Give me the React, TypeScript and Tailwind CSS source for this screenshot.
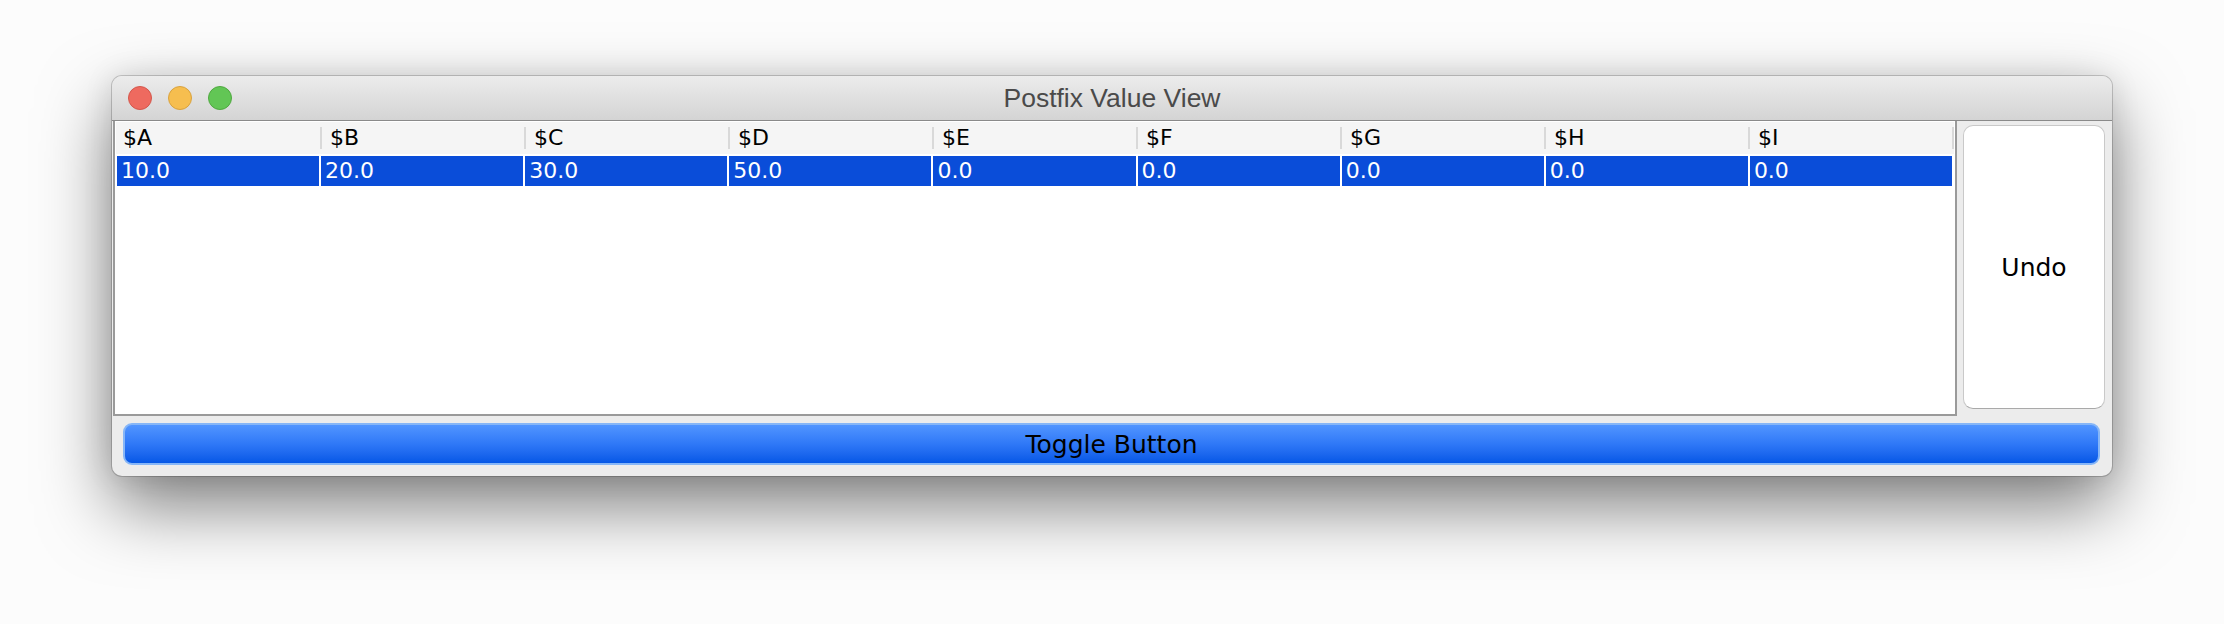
import React from "react";

const cols = ["$A", "$B", "$C", "$D", "$E", "$F", "$G", "$H", "$I"];
const vals = ["10.0", "20.0", "30.0", "50.0", "0.0", "0.0", "0.0", "0.0", "0.0"];

export default function App() {
  return (
    <div className="w-[2224px] h-[624px] bg-[#fcfcfc] pt-[76px] pl-[112px] overflow-hidden">
      <div
        className="w-[2000px] h-[400px] rounded-[10px] bg-[#ececec] flex flex-col overflow-hidden shadow-[0_0_0_1px_rgba(0,0,0,0.18),0_30px_70px_rgba(0,0,0,0.5),0_0_30px_rgba(0,0,0,0.1)]"
        style={{ fontFamily: '"DejaVu Sans", "Noto Sans", sans-serif' }}
      >
        {/* Title bar */}
        <div className="h-[45px] shrink-0 flex items-center bg-gradient-to-b from-[#ececec] to-[#d4d4d4] border-b border-[#8a8a8a]">
          <div className="w-[136px] flex items-center gap-[16px] pl-[16px]">
            <div className="w-[24px] h-[24px] rounded-full bg-[#ee6a5f] border border-[#d3574c]" />
            <div className="w-[24px] h-[24px] rounded-full bg-[#f6be4f] border border-[#d8a23f]" />
            <div className="w-[24px] h-[24px] rounded-full bg-[#62c655] border border-[#50a840]" />
          </div>
          <div
            className="flex-1 text-center text-[26.5px] text-[#4a4a4a] pr-[136px] leading-none"
            style={{ fontFamily: '"Liberation Sans", Arial, sans-serif' }}
          >
            Postfix Value View
          </div>
        </div>

        {/* Body */}
        <div className="flex h-[295px] shrink-0 items-start">
          <div className="ml-[1px] w-[1844px] h-[295px] bg-white border-l-2 border-r-2 border-b-2 border-[#9a9a9a] pt-[1px] px-[1px]">
            <div className="flex h-[32px] bg-[#f5f5f5]">
              {cols.map((c, i) => (
                <div key={c} className="flex-1 flex items-center">
                  {i > 0 && <div className="w-[2px] h-[22px] bg-[#d9d9d9]" />}
                  <span className={`text-[22px] text-black leading-none ${i === 0 ? "ml-[7px]" : "ml-[8px]"}`}>{c}</span>
                </div>
              ))}
              <div className="w-[2px] h-[22px] self-center bg-[#d9d9d9]" />
            </div>
            <div className="flex h-[30px] mt-[2px] gap-[2px] pl-[1px] pr-[2px]">
              {vals.map((v, i) => (
                <div key={i} className="flex-1 bg-[#0a4dd9] flex items-center pl-[4px]">
                  <span className="text-[22px] text-white leading-none">{v}</span>
                </div>
              ))}
            </div>
          </div>
          <div className="ml-[6px] mt-[4px] w-[142px] h-[284px] bg-white rounded-[10px] border border-[#c9c9c9] border-b-[#a9a9a9] flex items-center justify-center">
            <span className="text-[25px] text-black leading-none">Undo</span>
          </div>
        </div>

        <div className="mt-[7px] ml-[11px] w-[1977px] h-[42px] rounded-[9px] border-2 border-[#86b6f7] bg-gradient-to-b from-[#5195ff] via-[#2f78f7] to-[#0457e6] flex items-center justify-center">
          <span className="text-[25px] text-black leading-none">Toggle Button</span>
        </div>
      </div>
    </div>
  );
}
